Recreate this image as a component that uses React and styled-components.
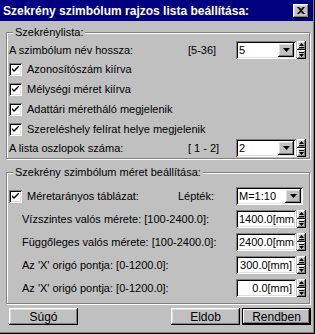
import styled, { createGlobalStyle } from 'styled-components';

const GlobalStyle = createGlobalStyle`
  * { box-sizing: border-box; }
  body {
    margin: 0;
    font-family: "Liberation Sans", Arial, sans-serif;
    font-size: 11px;
    color: #000;
  }
`;

const raised = `
  box-shadow: inset -1px -1px #000, inset 1px 1px #fff,
    inset -2px -2px #808080, inset 2px 2px #dfdfdf;
`;
const sunken = `
  box-shadow: inset 1px 1px #808080, inset -1px -1px #fff,
    inset 2px 2px #000, inset -2px -2px #dfdfdf;
`;

const Window = styled.div`
  width: 315px;
  height: 334px;
  background: #c0c0c0;
  padding: 0 2px 2px 0;
  box-shadow: inset -1px -1px #000, inset -2px -2px #808080;
  display: flex;
  flex-direction: column;
`;

const TitleBar = styled.div`
  height: 21px;
  background: #000080;
  color: #fff;
  font-weight: bold;
  font-size: 12px;
  display: flex;
  align-items: center;
  justify-content: space-between;
  padding: 0 4px 0 3px;
`;

const CloseButton = styled.div`
  width: 16px;
  height: 14px;
  background: #c0c0c0;
  ${raised}
  display: flex;
  align-items: center;
  justify-content: center;
`;

const Body = styled.div`
  padding: 11px 2px 0 6px;
  display: flex;
  flex-direction: column;
`;

const Group = styled.div`
  position: relative;
  width: 304px;
  border: 1px solid #808080;
  box-shadow: inset 1px 1px #fff, 1px 1px #fff;
  margin-top: ${p => p.$gap}px;
  padding: ${p => p.$pad};
  display: flex;
  flex-direction: column;
  gap: ${p => p.$rowGap}px;
`;

const Legend = styled.span`
  position: absolute;
  top: -8px;
  left: 6px;
  padding: 0 2px;
  line-height: 14px;
  background: #c0c0c0;
`;

const SettingRow = styled.div`
  display: grid;
  grid-template-columns: ${p => p.$cols};
  align-items: center;
  height: 18px;
  padding-left: ${p => p.$indent || 0}px;
`;

const CheckRow = styled.label`
  display: flex;
  align-items: center;
  gap: 5px;
  height: ${p => p.$h || 20}px;
`;

const Box = styled.span`
  width: 13px;
  height: 13px;
  flex: none;
  background: #fff;
  ${sunken}
  display: flex;
  align-items: center;
  justify-content: center;
`;

const Range = styled.span`
  white-space: pre;
`;

const Field = styled.div`
  height: 18px;
  width: ${p => p.$w || 60}px;
  background: #fff;
  ${sunken}
  display: flex;
  align-items: center;
  padding: 2px;
`;

const FieldText = styled.span`
  flex: 1;
  padding: 0 ${p => (p.$align === 'right' ? 2 : 1)}px 0 1px;
  white-space: nowrap;
  overflow: hidden;
  text-align: ${p => p.$align || 'left'};
  font-size: 11px;
`;

const DropButton = styled.span`
  width: 16px;
  height: 14px;
  flex: none;
  background: #c0c0c0;
  ${raised}
  display: flex;
  align-items: center;
  justify-content: center;
`;

const Spinner = styled.div`
  width: 9px;
  height: 18px;
  margin-left: 1px;
  display: flex;
  flex-direction: column;
`;

const SpinHalf = styled.span`
  height: 9px;
  background: #c0c0c0;
  ${raised}
  display: flex;
  align-items: center;
  justify-content: center;
`;

const PairLabel = styled.span`
  text-align: right;
  padding-right: 22px;
`;

const ButtonRow = styled.div`
  display: flex;
  padding: 4px 0 0 3px;
  gap: 2px;
`;

const Button = styled.button`
  width: 69px;
  height: 17px;
  font-family: inherit;
  font-size: 12px;
  background: #c0c0c0;
  border: none;
  padding: 0;
  ${raised}
  ${p => p.$default && `
    outline: 1px solid #000;
    outline-offset: -1px;
    box-shadow: inset -2px -2px #000, inset 2px 2px #fff,
      inset -3px -3px #808080, inset 1px 1px #000;
  `}
  &:first-child { margin-right: auto; }
`;

function Check() {
  return (
    <Box>
      <svg width="7" height="7" viewBox="0 0 7 7">
        <path d="M0 2 L0 4 L2 6 L7 1 L7 -1 L2 4 Z" fill="#000" />
      </svg>
    </Box>
  );
}

function Arrow({ up }) {
  return (
    <svg width="7" height="4" viewBox="0 0 7 4">
      <path d={up ? 'M3.5 0 L7 4 L0 4 Z' : 'M0 0 L7 0 L3.5 4 Z'} fill="#000" />
    </svg>
  );
}

function Spin() {
  return (
    <Spinner>
      <SpinHalf>
        <svg width="5" height="5" viewBox="0 0 5 5">
          <path d="M2.5 0 L5 3 L0 3 Z M0 4 H5 V5 H0 Z" fill="#000" />
        </svg>
      </SpinHalf>
      <SpinHalf>
        <svg width="5" height="5" viewBox="0 0 5 5">
          <path d="M0 0 H5 V1 H0 Z M0 2 L5 2 L2.5 5 Z" fill="#000" />
        </svg>
      </SpinHalf>
    </Spinner>
  );
}

function Combo({ value, w }) {
  return (
    <Field $w={w}>
      <FieldText>{value}</FieldText>
      <DropButton><Arrow /></DropButton>
    </Field>
  );
}

const sizes = [
  ['Vízszintes valós mérete: [100-2400.0]:', '1400.0[mm'],
  ['Függőleges valós mérete: [100-2400.0]:', '2400.0[mm'],
  ["Az 'X' origó pontja: [0-1200.0]:", '300.0[mm]'],
  ["Az 'X' origó pontja: [0-1200.0]:", '0.0[mm]'],
];

export default function App() {
  return (
    <>
      <GlobalStyle />
      <Window>
        <TitleBar>
          <span>Szekrény szimbólum rajzos lista beállítása:</span>
          <CloseButton>
            <svg width="8" height="7" viewBox="0 0 8 7">
              <path d="M0 0 H2 L4 2 L6 0 H8 L5 3.5 L8 7 H6 L4 5 L2 7 H0 L3 3.5 Z" fill="#000" />
            </svg>
          </CloseButton>
        </TitleBar>
        <Body>
          <Group $gap={0} $rowGap={0} $pad="8px 3px 1px 2px">
            <Legend>Szekrénylista:</Legend>
            <SettingRow $cols="1fr 48px 60px 10px">
              <span>A szimbólum név hossza:</span>
              <Range>[5-36]</Range>
              <Combo value="5" />
              <Spin />
            </SettingRow>
            <CheckRow><Check />Azonosítószám kiírva</CheckRow>
            <CheckRow><Check />Mélységi méret kiírva</CheckRow>
            <CheckRow><Check />Adattári méretháló megjelenik</CheckRow>
            <CheckRow><Check />Szereléshely felírat helye megjelenik</CheckRow>
            <SettingRow $cols="1fr 48px 60px 10px">
              <span>A lista oszlopok száma:</span>
              <Range>[ 1 - 2]</Range>
              <Combo value="2" />
              <Spin />
            </SettingRow>
          </Group>
          <Group $gap={13} $rowGap={5} $pad="14px 3px 6px 2px">
            <Legend>Szekrény szimbólum méret beállítása:</Legend>
            <SettingRow $cols="auto 1fr 67px 3px">
              <CheckRow $h={18}><Check />Méretarányos táblázat:</CheckRow>
              <PairLabel>Lépték:</PairLabel>
              <Combo value="M=1:10" w={67} />
            </SettingRow>
            {sizes.map(([label, value], i) => (
              <SettingRow key={i} $cols="1fr 60px 10px" $indent={13}>
                <span>{label}</span>
                <Field><FieldText $align="right">{value}</FieldText></Field>
                <Spin />
              </SettingRow>
            ))}
          </Group>
          <ButtonRow>
            <Button>Súgó</Button>
            <Button>Eldob</Button>
            <Button $default>Rendben</Button>
          </ButtonRow>
        </Body>
      </Window>
    </>
  );
}
